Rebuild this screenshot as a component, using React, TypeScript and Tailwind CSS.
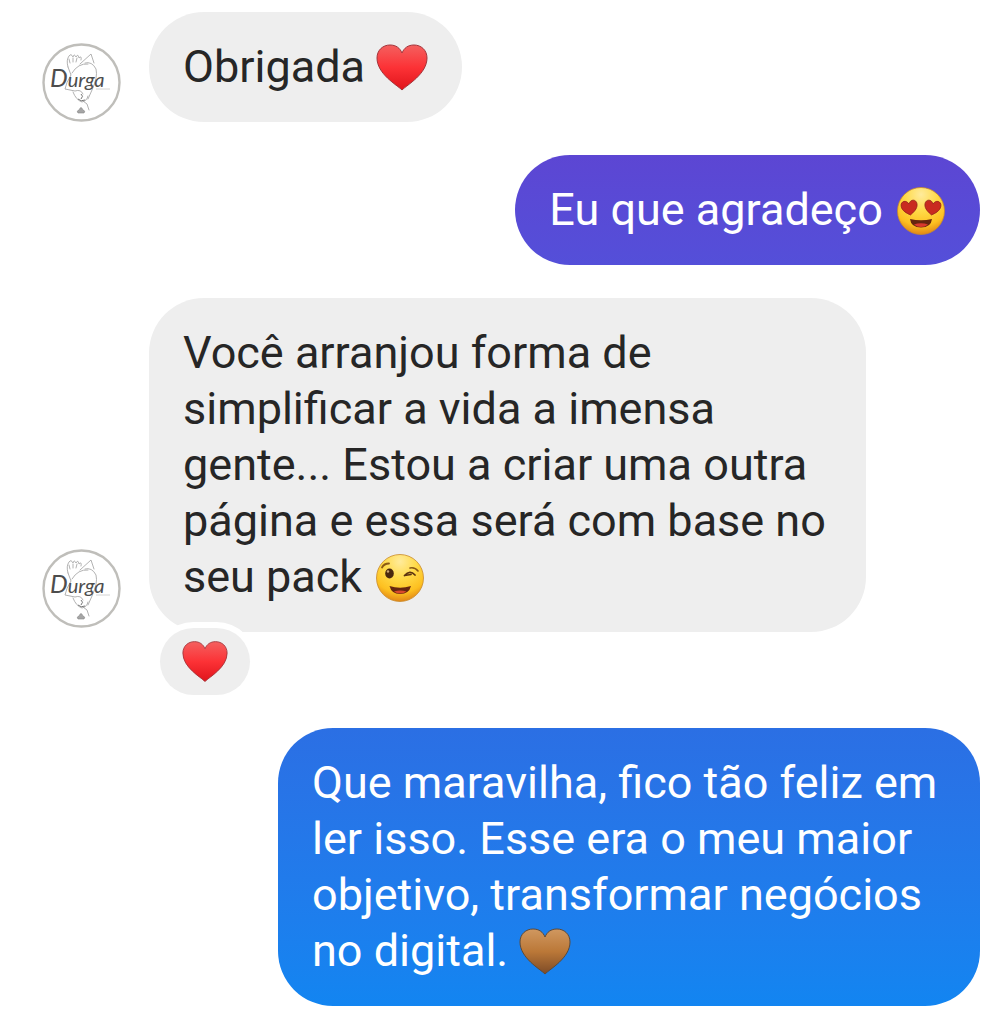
import { useId, type ReactNode } from 'react'
import { clsx } from 'clsx'

type Tone = 'red' | 'brown'

const heartTones: Record<Tone, { top: string; mid: string; low: string; edge: string }> = {
  red: { top: '#f4605f', mid: '#fc3236', low: '#e0141b', edge: '#a3343a' },
  brown: { top: '#d09860', mid: '#bb7838', low: '#7d4b27', edge: '#5f4a37' },
}

const HEART = 'M27 49 C22 44 2 33 2 17 C2 9 8 4 15 4 C21 4 25 7 27 12 C29 7 33 4 39 4 C46 4 52 9 52 17 C52 33 32 44 27 49 Z'

function Heart({ tone = 'red', className }: { tone?: Tone; className?: string }) {
  const id = useId()
  const c = heartTones[tone]

  return (
    <svg viewBox="1 1 52 52" className={className} role="img" aria-label={tone === 'red' ? '❤️' : '🤎'}>
      <defs>
        <linearGradient id={id} x1="0" y1="0" x2="0" y2="1">
          <stop offset="0" stopColor={c.top} />
          <stop offset="0.5" stopColor={c.mid} />
          <stop offset="1" stopColor={c.low} />
        </linearGradient>
      </defs>
      <path d={HEART} fill={`url(#${id})`} stroke={c.edge} strokeWidth="1" strokeLinejoin="round" />
    </svg>
  )
}

function Face({ label, children }: { label: string; children: ReactNode }) {
  const id = useId()

  return (
    <svg viewBox="1 1 52 52" className="-mt-1 inline-block size-[52px] align-middle" role="img" aria-label={label}>
      <defs>
        <radialGradient id={id} cx="0.5" cy="0.15" r="0.88">
          <stop offset="0" stopColor="#ffeb9c" />
          <stop offset="0.4" stopColor="#ffda48" />
          <stop offset="0.75" stopColor="#fdc020" />
          <stop offset="1" stopColor="#dd7d16" />
        </radialGradient>
      </defs>
      <circle cx="28" cy="27" r="23.5" fill={`url(#${id})`} stroke="#c98a2b" strokeWidth="0.8" />
      {children}
    </svg>
  )
}

const SMALL_HEART = 'M0 7 C-3 5 -8 2 -8 -3 C-8 -8 -2 -9 0 -4 C2 -9 8 -8 8 -3 C8 2 3 5 0 7 Z'

function HeartEyes() {
  return (
    <Face label="😍">
      <path d={SMALL_HEART} transform="translate(16.5 24) rotate(-8)" fill="#c92a20" stroke="#93241a" strokeWidth="0.8" />
      <path d={SMALL_HEART} transform="translate(39.5 24) rotate(8)" fill="#c92a20" stroke="#93241a" strokeWidth="0.8" />
      <path d="M17 35 Q28 37.5 39 35 Q38 43.5 28 43.5 Q18 43.5 17 35 Z" fill="#66250f" />
      <path d="M21 40.5 Q28 38 35 40.5 Q32 43 28 43 Q24 43 21 40.5 Z" fill="#d9392d" />
    </Face>
  )
}

function Wink() {
  return (
    <Face label="😉">
      <ellipse cx="17.5" cy="22.5" rx="4.3" ry="5" fill="#49270e" />
      <circle cx="16" cy="20.5" r="1.2" fill="#c9a374" />
      <path d="M10 16.5 Q12 12.5 17 12.5" fill="none" stroke="#8b5914" strokeWidth="1.8" strokeLinecap="round" />
      <path d="M38 17 Q43 16 46 20" fill="none" stroke="#8b5914" strokeWidth="1.6" strokeLinecap="round" />
      <path d="M32.500 24.500 Q38 18.5 43 24 M32.500 24.500 L39 23.5" fill="none" stroke="#5c3310" strokeWidth="1.7" strokeLinecap="round" />
      <path d="M17.500 35 Q28 38.5 39 35 Q37 43 28 43 Q19.500 43 17.500 35 Z" fill="#66250f" />
      <path d="M22 40.5 Q28 38.5 34.5 40.5 Q32 42.5 28 42.5 Q24.5 42.5 22 40.5 Z" fill="#d9492d" />
    </Face>
  )
}

function Avatar() {
  return (
    <svg viewBox="0 0 79 79" className="size-[79px] shrink-0" role="img" aria-label="Durga">
      <circle cx="39.5" cy="39.5" r="38" fill="#fff" stroke="#bfbeba" strokeWidth="2.4" />
      <g fill="none" stroke="#a9a9a9" strokeWidth="0.9" strokeLinecap="round" strokeLinejoin="round">
        <path d="M26 24 Q24 17 27 13 Q29 10 31 14 Q32 10 34 14 Q36 10 37 15 Q40 12 39 17" />
        <path d="M27 16 L28 20 M31 15 L31 19 M35 15 L34 19" />
        <path d="M38 21 L49 11 L52 20 M43 20 Q50 18 54 26 Q56 34 50 47 L46 56" />
        <path d="M26 24 L29 32 Q24 40 23 46 L33 48 Q39 46 41 51" />
        <path d="M30 30 Q36 20 46 21 M31 49 Q34 57 40 59 Q45 58 46 53" />
        <path d="M41 58 L45 61 L47 67" />
      </g>
      <path d="M54 46 H68" stroke="#c9c9c9" strokeWidth="0.8" />
      <path d="M39 51 Q42 53 39 56 M36 56 Q39 59 43 57" fill="none" stroke="#777" strokeWidth="1" />
      <path d="M36 70 Q34 68 37 67 Q39 62 41 67 Q44 68 42 70 Z" fill="#a5a5a5" stroke="#888" strokeWidth="0.6" />
      <text x="8" y="44" fill="#4d4d4d" fontFamily="Lato, sans-serif" fontStyle="italic" fontSize="20">
        <tspan fontSize="25">D</tspan>urga
      </text>
    </svg>
  )
}

interface BubbleProps {
  variant: 'received' | 'purple' | 'blue'
  children: ReactNode
}

function Bubble({ variant, children }: BubbleProps) {
  return (
    <p
      className={clsx(
        'rounded-[55px] px-[34px] py-[27px] text-[45px] leading-[56px]',
        variant === 'received' && 'max-w-[717px] bg-[#eeeeee] text-[#262626]',
        variant === 'purple' && 'max-w-[702px] bg-linear-to-b from-[#5c46d3] to-[#544fd9] text-white',
        variant === 'blue' && 'max-w-[702px] bg-linear-to-b from-[#2b6fe4] to-[#1285f1] text-white',
      )}
    >
      {children}
    </p>
  )
}

export default function App() {
  return (
    <main className="flex min-h-screen flex-col gap-[33px] bg-white pt-3 pr-[22px] pb-4 pl-[42px] font-[Roboto,sans-serif]">
      <div className="flex items-end gap-7">
        <Avatar />
        <Bubble variant="received">
          Obrigada <Heart className="-mt-1 inline-block size-[52px] align-middle" />
        </Bubble>
      </div>

      <div className="flex justify-end">
        <Bubble variant="purple">
          Eu que agradeço <HeartEyes />
        </Bubble>
      </div>

      <div>
        <div className="flex items-end gap-7">
          <div className="pb-1">
            <Avatar />
          </div>
          <Bubble variant="received">
            Você arranjou forma de simplificar a vida a imensa gente... Estou a criar uma outra página e essa será com base no seu pack <Wink />
          </Bubble>
        </div>
        <button
          type="button"
          aria-label="❤️"
          className="relative -mt-1 ml-[118px] flex h-[67px] w-[90px] items-center justify-center rounded-full bg-[#eeeeee] ring-[6px] ring-white"
        >
          <Heart className="size-[46px]" />
        </button>
      </div>

      <div className="flex justify-end">
        <Bubble variant="blue">
          Que maravilha, fico tão feliz em ler isso. Esse era o meu maior objetivo, transformar negócios no digital. <Heart tone="brown" className="-mt-1 inline-block size-[52px] align-middle" />
        </Bubble>
      </div>
    </main>
  )
}
